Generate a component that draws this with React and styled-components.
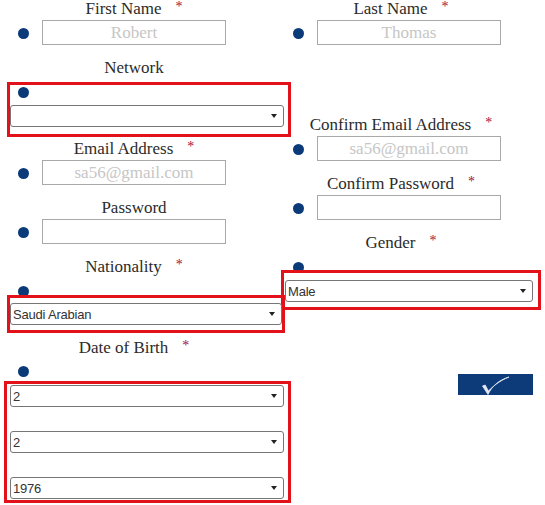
import React from "react";
import styled, { createGlobalStyle } from "styled-components";

const GlobalStyle = createGlobalStyle`
  html, body {
    margin: 0;
    padding: 0;
    background: #fff;
  }
  body {
    font-family: "Liberation Serif", "Times New Roman", serif;
  }
`;

const Form = styled.form`
  display: flex;
  align-items: flex-start;
  width: 545px;
  height: 505px;
  overflow: hidden;
`;

const Column = styled.div`
  display: flex;
  flex-direction: column;
  align-items: flex-start;
  flex-shrink: 0;
  width: ${(p) => p.$width}px;
`;

const Label = styled.div`
  display: flex;
  justify-content: center;
  align-items: flex-start;
  width: 184px;
  height: 18px;
  margin-top: ${(p) => p.$top || 0}px;
  margin-left: ${(p) => p.$left}px;
  font-size: 17px;
  line-height: 18px;
  color: #2b2b2b;
  white-space: nowrap;
`;

const Required = styled.span`
  margin-left: 14px;
  font-size: 14px;
  line-height: 14px;
  color: #a3123c;
`;

const Row = styled.div`
  display: flex;
  align-items: flex-start;
  gap: 13px;
  margin-top: 2px;
  padding-left: 18px;
`;

const Bullet = styled.span`
  display: block;
  flex-shrink: 0;
  width: 11px;
  height: 11px;
  border-radius: 50%;
  background: #0b3a78;
  margin-top: ${(p) => p.$top || 0}px;
  margin-left: ${(p) => p.$left || 0}px;
`;

const TextInput = styled.input`
  box-sizing: border-box;
  width: 184px;
  height: 25px;
  margin: 0;
  padding: 0 4px;
  border: 1px solid #a9a9a9;
  background: #fff;
  font-family: "Liberation Serif", "Times New Roman", serif;
  font-size: 17px;
  text-align: center;
  color: #333;
  outline: none;

  &::placeholder {
    color: #c6c6c6;
  }
`;

const ErrorBox = styled.div`
  box-sizing: border-box;
  display: flex;
  flex-direction: column;
  align-items: flex-start;
  gap: ${(p) => p.$gap || 0}px;
  width: ${(p) => p.$width}px;
  margin-top: ${(p) => p.$top}px;
  margin-left: ${(p) => p.$left}px;
  padding: ${(p) => p.$pad};
  border: 3px solid #e3121a;
`;

const SelectWrap = styled.div`
  position: relative;
  width: ${(p) => p.$width}px;
  height: 22px;
  margin-top: ${(p) => p.$top || 0}px;

  &::after {
    content: "";
    position: absolute;
    right: 7px;
    top: 9px;
    border-left: 3px solid transparent;
    border-right: 3px solid transparent;
    border-top: 4px solid #222;
    pointer-events: none;
  }
`;

const Select = styled.select`
  appearance: none;
  box-sizing: border-box;
  width: 100%;
  height: 100%;
  margin: 0;
  padding: 0 20px 0 2px;
  border: 1px solid #767676;
  border-radius: 3px;
  background: #fff;
  font-family: "Liberation Sans", Arial, sans-serif;
  font-size: 13px;
  letter-spacing: -0.2px;
  color: #333;
  outline: none;
`;

const SubmitButton = styled.button`
  display: flex;
  align-items: flex-end;
  justify-content: center;
  width: 75px;
  height: 21px;
  margin-top: ${(p) => p.$top}px;
  margin-left: ${(p) => p.$left}px;
  padding: 0;
  border: none;
  background: #0d3b7a;
  cursor: pointer;
`;

function Field({ label, required, placeholder, type = "text", labelLeft, top }) {
  return (
    <>
      <Label $left={labelLeft} $top={top}>
        {label}
        {required && <Required>*</Required>}
      </Label>
      <Row>
        <Bullet $top={8} />
        <TextInput type={type} placeholder={placeholder} />
      </Row>
    </>
  );
}

function Dropdown({ width, top, value, options }) {
  return (
    <SelectWrap $width={width} $top={top}>
      <Select defaultValue={value}>
        {options.map((o) => (
          <option key={o} value={o}>
            {o}
          </option>
        ))}
      </Select>
    </SelectWrap>
  );
}

const days = Array.from({ length: 31 }, (_, i) => String(i + 1));
const months = Array.from({ length: 12 }, (_, i) => String(i + 1));
const years = Array.from({ length: 60 }, (_, i) => String(1950 + i));

export default function App() {
  return (
    <>
      <GlobalStyle />
      <Form onSubmit={(e) => e.preventDefault()}>
        <Column $width={275}>
          <Field label="First Name" required placeholder="Robert" labelLeft={42} />

          <Label $left={42} $top={14}>Network</Label>
          <ErrorBox $width={284} $left={7} $top={5} $pad="2px 4px 7px 0">
            <Bullet $left={8} />
            <Dropdown width={274} top={7} value="" options={["", "Facebook", "Twitter", "LinkedIn"]} />
          </ErrorBox>

          <Field label="Email Address" required placeholder="sa56@gmail.com" labelLeft={42} top={3} />
          <Field label="Password" type="password" labelLeft={42} top={14} />

          <Label $left={42} $top={14}>
            Nationality
            <Required>*</Required>
          </Label>
          <Bullet $left={18} $top={10} />
          <ErrorBox $width={278} $left={7} $top={-2} $pad="5px 0 5px 0">
            <Dropdown width={272} value="Saudi Arabian" options={["Saudi Arabian", "Emirati", "Egyptian", "Other"]} />
          </ErrorBox>

          <Label $left={42} $top={6}>
            Date of Birth
            <Required>*</Required>
          </Label>
          <Bullet $left={18} $top={9} />
          <ErrorBox $width={287} $left={4} $top={4} $pad="1px 4px 1px 3px" $gap={24}>
            <Dropdown width={274} value="2" options={days} />
            <Dropdown width={274} value="2" options={months} />
            <Dropdown width={274} value="1976" options={years} />
          </ErrorBox>
        </Column>

        <Column $width={270}>
          <Field label="Last Name" required placeholder="Thomas" labelLeft={34} />
          <Field label="Confirm Email Address" required placeholder="sa56@gmail.com" labelLeft={34} top={71} />
          <Field label="Confirm Password" required type="password" labelLeft={34} top={14} />

          <Label $left={34} $top={14}>
            Gender
            <Required>*</Required>
          </Label>
          <Bullet $left={18} $top={10} />
          <ErrorBox $width={260} $left={6} $top={-3} $pad="7px 0 5px 1px">
            <Dropdown width={248} value="Male" options={["Male", "Female"]} />
          </ErrorBox>

          <SubmitButton type="submit" $left={183} $top={64} aria-label="Submit">
            <svg width="30" height="20" viewBox="0 0 30 20">
              <path
                d="M1.5 11 L7 19.5 C 11 11 18 5 28 2 C 18 6 12 11.5 7.4 16 L 4.2 10 Z"
                fill="#e3e8f1"
                stroke="#e3e8f1"
                strokeWidth="0.8"
                strokeLinejoin="round"
              />
            </svg>
          </SubmitButton>
        </Column>
      </Form>
    </>
  );
}
